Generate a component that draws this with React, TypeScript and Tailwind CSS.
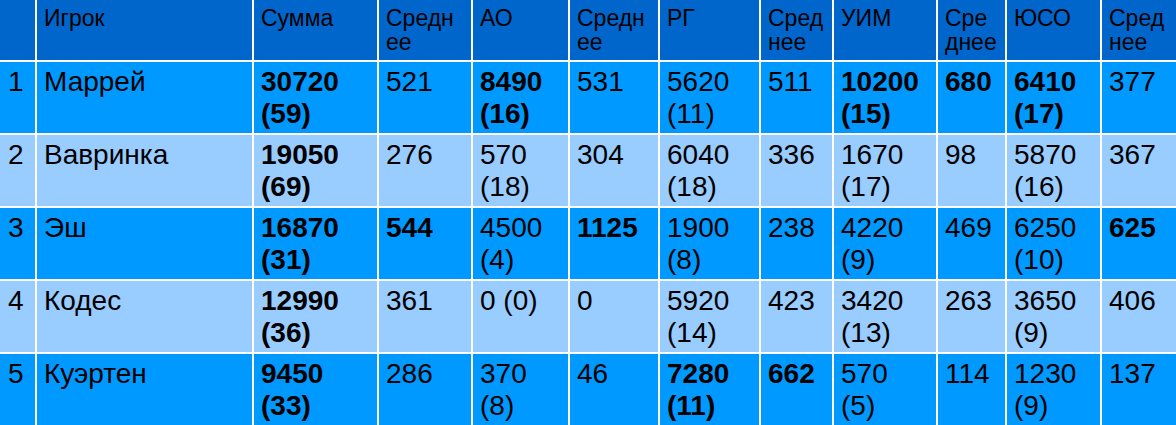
import React from "react";

type Cell = { t: string; b?: boolean };

const header = ["", "Игрок", "Сумма", "Средн\nее", "АО", "Средн\nее", "РГ", "Сред\nнее", "УИМ", "Сре\nднее", "ЮСО", "Сред\nнее"];

const B = (t: string): Cell => ({ t, b: true });
const N = (t: string): Cell => ({ t });

const rows: Cell[][] = [
  [N("1"), N("Маррей"), B("30720\n(59)"), N("521"), B("8490\n(16)"), N("531"), N("5620\n(11)"), N("511"), B("10200\n(15)"), B("680"), B("6410\n(17)"), N("377")],
  [N("2"), N("Вавринка"), B("19050\n(69)"), N("276"), N("570\n(18)"), N("304"), N("6040\n(18)"), N("336"), N("1670\n(17)"), N("98"), N("5870\n(16)"), N("367")],
  [N("3"), N("Эш"), B("16870\n(31)"), B("544"), N("4500\n(4)"), B("1125"), N("1900\n(8)"), N("238"), N("4220\n(9)"), N("469"), N("6250\n(10)"), B("625")],
  [N("4"), N("Кодес"), B("12990\n(36)"), N("361"), N("0 (0)"), N("0"), N("5920\n(14)"), N("423"), N("3420\n(13)"), N("263"), N("3650\n(9)"), N("406")],
  [N("5"), N("Куэртен"), B("9450\n(33)"), N("286"), N("370\n(8)"), N("46"), B("7280\n(11)"), B("662"), N("570\n(5)"), N("114"), N("1230\n(9)"), N("137")],
];

export default function App() {
  return (
    <div
      className="w-[1176px] h-[425px] overflow-hidden bg-white"
      style={{ fontFamily: '"Liberation Sans", Arial, sans-serif' }}
    >
      <div className="grid grid-cols-[35px_215px_123px_92px_95px_88px_99px_71px_102px_67px_93px_74px] grid-rows-[60px_repeat(5,71px)] gap-[2px] bg-white text-black">
        {header.map((h, i) => (
          <div
            key={"h" + i}
            className={`bg-[#0066cc] whitespace-pre-line text-[23px] leading-[24px] pt-[6px] ${i === 0 ? "pl-[8px]" : "pl-[7px]"}`}
          >
            {h}
          </div>
        ))}
        {rows.map((r, ri) =>
          r.map((c, ci) => (
            <div
              key={ri + "-" + ci}
              className={`${ri % 2 === 0 ? "bg-[#0099ff]" : "bg-[#99ccff]"} whitespace-pre-line text-[28px] leading-[32px] pt-[4px] ${ci === 0 ? "pl-[8px]" : "pl-[7px]"} ${c.b ? "font-bold" : ""}`}
            >
              {c.t}
            </div>
          ))
        )}
      </div>
    </div>
  );
}
